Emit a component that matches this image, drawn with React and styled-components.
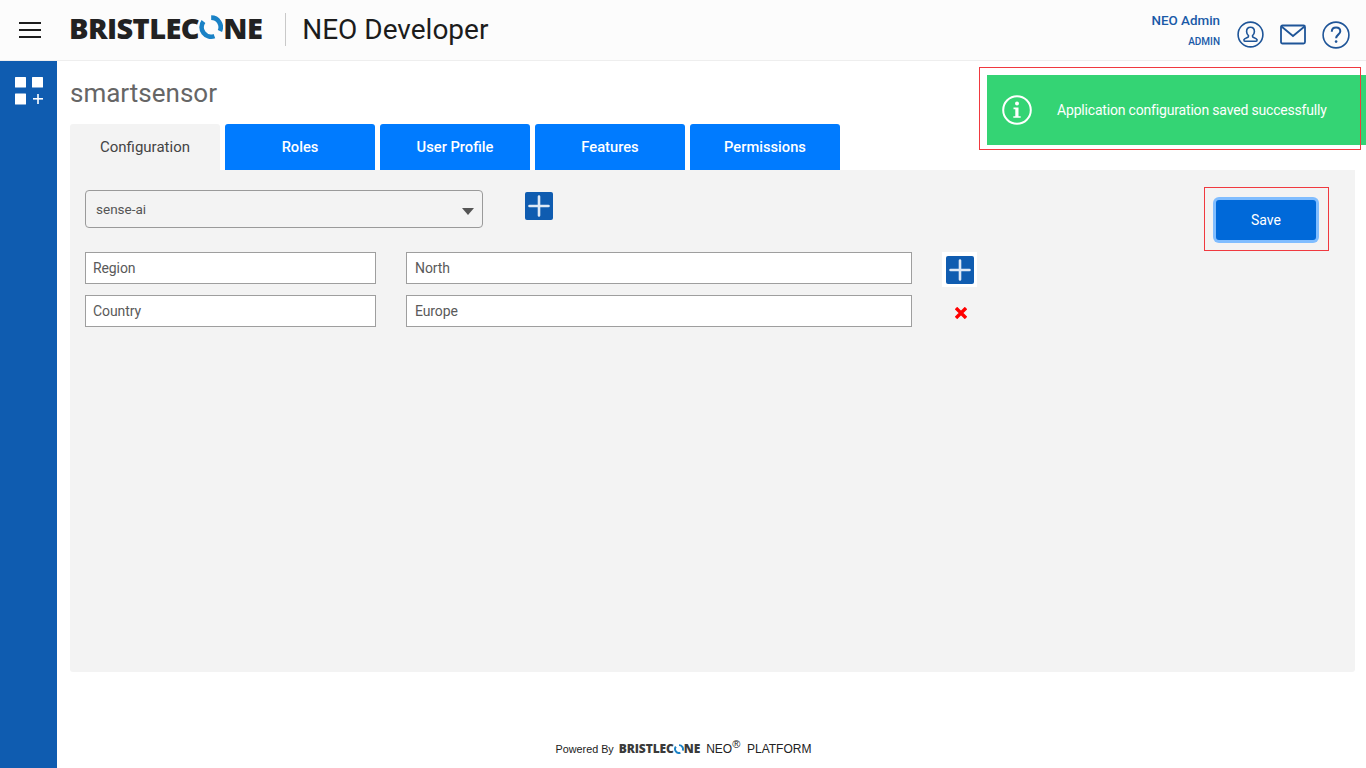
import React from 'react'
import styled, { createGlobalStyle } from 'styled-components'

const GlobalStyle = createGlobalStyle`
    html, body {
        margin: 0;
        padding: 0;
        background: #fff;
        font-family: Roboto, "Liberation Sans", sans-serif;
    }
    * { box-sizing: border-box; }
`

const Page = styled.div`
    position: relative;
    width: 1366px;
    height: 768px;
    overflow: hidden;
    display: flex;
    flex-direction: column;
`

const Header = styled.header`
    height: 61px;
    flex: none;
    display: flex;
    align-items: center;
    padding: 0 16px 0 19px;
    background: #fcfcfc;
    border-bottom: 1px solid #eeeeee;
`

const Burger = styled.div`
    width: 22px;
    display: flex;
    flex-direction: column;
    gap: 5px;
    margin-right: 28px;
    span {
        display: block;
        height: 2px;
        background: #1c1c1c;
    }
`

const LogoWrap = styled.div`
    display: inline-flex;
    align-items: center;
    margin-bottom: ${props => props.lift || 0}px;
    font-family: "Open Sans", sans-serif;
    font-weight: 800;
    font-size: ${props => props.size}px;
    letter-spacing: ${props => props.spacing}px;
    line-height: 1;
    color: ${props => props.color};
    svg {
        flex: none;
        width: 0.84em;
        height: 0.84em;
    }
`

const AppName = styled.div`
    margin-left: 23px;
    padding-left: 16px;
    height: 33px;
    margin-bottom: 2px;
    display: flex;
    align-items: center;
    border-left: 1px solid #c9c9c9;
    font-size: 28px;
    color: #1c1c1c;
`

const UserArea = styled.div`
    margin-left: auto;
    display: flex;
    align-items: center;
`

const UserText = styled.div`
    text-align: right;
    color: #1a5aa8;
    margin-right: 17px;
`

const UserName = styled.div`
    font-size: 13.4px;
    font-weight: 500;
    line-height: 18px;
`

const UserRole = styled.div`
    font-size: 10px;
    font-weight: 500;
    line-height: 12px;
    margin-top: 6px;
`

const IconRow = styled.div`
    display: flex;
    align-items: center;
    gap: 16px;
    margin-top: 9px;
    color: #1f5598;
    svg { display: block; }
`

const Body = styled.div`
    flex: 1;
    display: flex;
    min-height: 0;
`

const Sidebar = styled.aside`
    width: 57px;
    flex: none;
    background: #0f5cb0;
    padding: 15px 0 0 14px;
`

const Main = styled.main`
    flex: 1;
    display: flex;
    flex-direction: column;
    padding: 0 11px 0 13px;
`

const Title = styled.h1`
    margin: 16px 0 0;
    height: 47px;
    font-size: 26px;
    line-height: 32px;
    font-weight: 400;
    color: #666666;
`

const Tabs = styled.div`
    display: flex;
    gap: 5px;
`

const Tab = styled.div`
    width: 150px;
    height: 46px;
    display: flex;
    align-items: center;
    justify-content: center;
    border-radius: 3px 3px 0 0;
    font-size: ${props => (props.$active ? 15 : 14.7)}px;
    font-weight: ${props => (props.$active ? 400 : 500)};
    color: ${props => (props.$active ? '#444444' : '#ffffff')};
    background: ${props => (props.$active ? '#f3f3f3' : '#007bff')};
`

const Panel = styled.section`
    height: 502px;
    flex: none;
    display: flex;
    justify-content: space-between;
    align-items: flex-start;
    padding: 20px 39px 0 15px;
    background: #f3f3f3;
    border-radius: 0 0 3px 3px;
`

const Form = styled.div`
    display: flex;
    flex-direction: column;
`

const SelectRow = styled.div`
    display: flex;
    align-items: flex-start;
    gap: 42px;
    margin-bottom: 24px;
`

const SelectBox = styled.div`
    position: relative;
    width: 398px;
    height: 38px;
    display: flex;
    align-items: center;
    padding-left: 10px;
    border: 1px solid #9a9a9a;
    border-radius: 4px;
    font-size: 13.5px;
    color: #555555;
    &::after {
        content: '';
        position: absolute;
        right: 8px;
        top: 17px;
        border-left: 6.5px solid transparent;
        border-right: 6.5px solid transparent;
        border-top: 7px solid #555555;
    }
`

const PlusButton = styled.div`
    width: 28px;
    height: 28px;
    margin-top: 2px;
    display: flex;
    align-items: center;
    justify-content: center;
    background: #0f5cb0;
    border-radius: 2px;
    svg { display: block; }
`

const PlusHalo = styled.div`
    width: 35px;
    height: 35px;
    margin-left: 30px;
    display: flex;
    align-items: center;
    justify-content: center;
    background: #ffffff;
    ${PlusButton} {
        margin-top: 0;
    }
`

const FieldRow = styled.div`
    display: flex;
    align-items: flex-start;
    height: 43px;
`

const Field = styled.div`
    width: ${props => props.width}px;
    height: 32px;
    margin-right: ${props => props.gap || 0}px;
    display: flex;
    align-items: center;
    padding-left: ${props => props.pad}px;
    background: #ffffff;
    border: 1px solid #9e9e9e;
    font-size: 14px;
    letter-spacing: -0.1px;
    color: #5a5a5a;
`

const RemoveIcon = styled.div`
    margin-left: 43px;
    margin-top: 12px;
    svg { display: block; }
`

const SaveButton = styled.button`
    width: 100px;
    height: 40px;
    margin-top: 10px;
    border: none;
    border-radius: 3px;
    background: #0069d9;
    box-shadow: 0 0 0 3px #80bdff;
    color: #ffffff;
    font-family: Roboto, sans-serif;
    font-size: 14px;
    font-weight: 400;
`

const Footer = styled.footer`
    flex: 1;
    display: flex;
    align-items: center;
    justify-content: center;
    padding: 58px 0 0 0;
    margin-right: 58px;
    font-family: "Liberation Sans", sans-serif;
    font-size: 12px;
    color: #222222;
`

const Powered = styled.span`
    font-size: 10.8px;
    margin-right: 5px;
`

const FooterProduct = styled.span`
    margin-left: 6px;
    sup {
        font-size: 11px;
        line-height: 0;
    }
`

const Toast = styled.div`
    position: absolute;
    left: 987px;
    top: 75px;
    width: 379px;
    height: 70px;
    display: flex;
    align-items: center;
    padding-left: 15px;
    background: #34d474;
    color: #ffffff;
    font-size: 14px;
    letter-spacing: -0.18px;
    svg {
        display: block;
        margin-right: 25px;
    }
`

const RedMark = styled.div`
    position: absolute;
    left: ${props => props.left}px;
    top: ${props => props.top}px;
    width: ${props => props.width}px;
    height: ${props => props.height}px;
    border: 1px solid #f0393f;
    pointer-events: none;
`

const Logo = ({ size, spacing, lift, color }) => (
    <LogoWrap size={size} spacing={spacing} lift={lift} color={color}>
        BRISTLEC
        <svg viewBox="0 0 24 24" fill="none" stroke="#1a82c6" strokeWidth="4.6">
            <path d="M12 2.6 A9.4 9.4 0 0 1 20.6 15.8" />
            <path d="M15.2 20.8 A9.4 9.4 0 0 1 4.4 6.4" />
        </svg>
        NE
    </LogoWrap>
)

const UserIcon = () => (
    <svg width="27" height="27" viewBox="0 0 27 27" fill="none" stroke="currentColor" strokeWidth="1.6">
        <circle cx="13.5" cy="13.5" r="12.4" />
        <path d="M13.5 6.2c-2.4 0-3.9 1.8-3.9 4.3 0 1.7.7 3.1 1.8 4v1.2c0 .8-3.8 1.4-4.5 3 0 .8.3 1.6 1 1.6h11.2c.7 0 1-.8 1-1.6-.7-1.6-4.5-2.2-4.5-3v-1.2c1.1-.9 1.8-2.3 1.8-4 0-2.5-1.5-4.3-3.9-4.3z" />
    </svg>
)

const MailIcon = () => (
    <svg width="26" height="21" viewBox="0 0 26 21" fill="none" stroke="currentColor" strokeWidth="1.8">
        <rect x="1" y="1.5" width="24" height="18" rx="1.5" />
        <path d="M1.5 2.5 L13 12 L24.5 2.5" />
    </svg>
)

const HelpIcon = () => (
    <svg width="28" height="28" viewBox="0 0 28 28" fill="none" stroke="currentColor" strokeWidth="1.6">
        <circle cx="14" cy="14" r="12.9" />
        <path d="M9.8 10.8c0-2.6 1.9-4.2 4.3-4.2s4.2 1.5 4.2 3.7c0 3.3-4.2 3.4-4.2 7" strokeWidth="2" />
        <circle cx="14.1" cy="20.6" r="1.3" fill="currentColor" stroke="none" />
    </svg>
)

const AppsIcon = () => (
    <svg width="30" height="30" viewBox="0 0 30 30" fill="#ffffff">
        <rect x="1" y="1" width="11" height="10.5" rx="0.5" />
        <rect x="18" y="1" width="11" height="10.5" rx="0.5" />
        <rect x="1" y="17.5" width="11" height="11" rx="0.5" />
        <rect x="19" y="22" width="10" height="1.6" />
        <rect x="23.2" y="18" width="1.6" height="10" />
    </svg>
)

const PlusIcon = () => (
    <svg width="22" height="22" viewBox="0 0 22 22" stroke="#dfe9f5" strokeWidth="2.6" strokeLinecap="round">
        <path d="M11 1.5v19M1.5 11h19" />
    </svg>
)

const CrossIcon = () => (
    <svg width="12" height="12" viewBox="0 0 12 12" stroke="#ff0000" strokeWidth="3.4">
        <path d="M1 1l10 10M11 1L1 11" />
    </svg>
)

const InfoIcon = () => (
    <svg width="30" height="30" viewBox="0 0 30 30" fill="none" stroke="#ffffff" strokeWidth="2">
        <circle cx="15" cy="15" r="13.8" />
        <circle cx="15" cy="8.5" r="2" fill="#ffffff" stroke="none" />
        <path d="M11.5 12.6h5v8.6h2.2v1.6h-7.4v-1.6h2v-7h-1.8z" fill="#ffffff" stroke="none" />
    </svg>
)

const App = () => {
    return (
        <Page>
            <GlobalStyle />
            <Header>
                <Burger><span /><span /><span /></Burger>
                <Logo size={29} spacing={-0.6} lift={5} color="#222222" />
                <AppName>NEO Developer</AppName>
                <UserArea>
                    <UserText>
                        <UserName>NEO Admin</UserName>
                        <UserRole>ADMIN</UserRole>
                    </UserText>
                    <IconRow>
                        <UserIcon />
                        <MailIcon />
                        <HelpIcon />
                    </IconRow>
                </UserArea>
            </Header>
            <Body>
                <Sidebar><AppsIcon /></Sidebar>
                <Main>
                    <Title>smartsensor</Title>
                    <Tabs>
                        <Tab $active>Configuration</Tab>
                        <Tab>Roles</Tab>
                        <Tab>User Profile</Tab>
                        <Tab>Features</Tab>
                        <Tab>Permissions</Tab>
                    </Tabs>
                    <Panel>
                        <Form>
                            <SelectRow>
                                <SelectBox>sense-ai</SelectBox>
                                <PlusButton><PlusIcon /></PlusButton>
                            </SelectRow>
                            <FieldRow>
                                <Field width={291} gap={30} pad={7}>Region</Field>
                                <Field width={506} pad={8}>North</Field>
                                <PlusHalo><PlusButton><PlusIcon /></PlusButton></PlusHalo>
                            </FieldRow>
                            <FieldRow>
                                <Field width={291} gap={30} pad={7}>Country</Field>
                                <Field width={506} pad={8}>Europe</Field>
                                <RemoveIcon><CrossIcon /></RemoveIcon>
                            </FieldRow>
                        </Form>
                        <SaveButton>Save</SaveButton>
                    </Panel>
                    <Footer>
                        <Powered>Powered By</Powered>
                        <Logo size={12} spacing={-0.1} color="#3a3a3a" />
                        <FooterProduct>NEO<sup>®</sup>&nbsp; PLATFORM</FooterProduct>
                    </Footer>
                </Main>
            </Body>
            <Toast>
                <InfoIcon />
                Application configuration saved successfully
            </Toast>
            <RedMark left={979} top={67} width={382} height={83} />
            <RedMark left={1204} top={187} width={125} height={64} />
        </Page>
    )
}

export default App
